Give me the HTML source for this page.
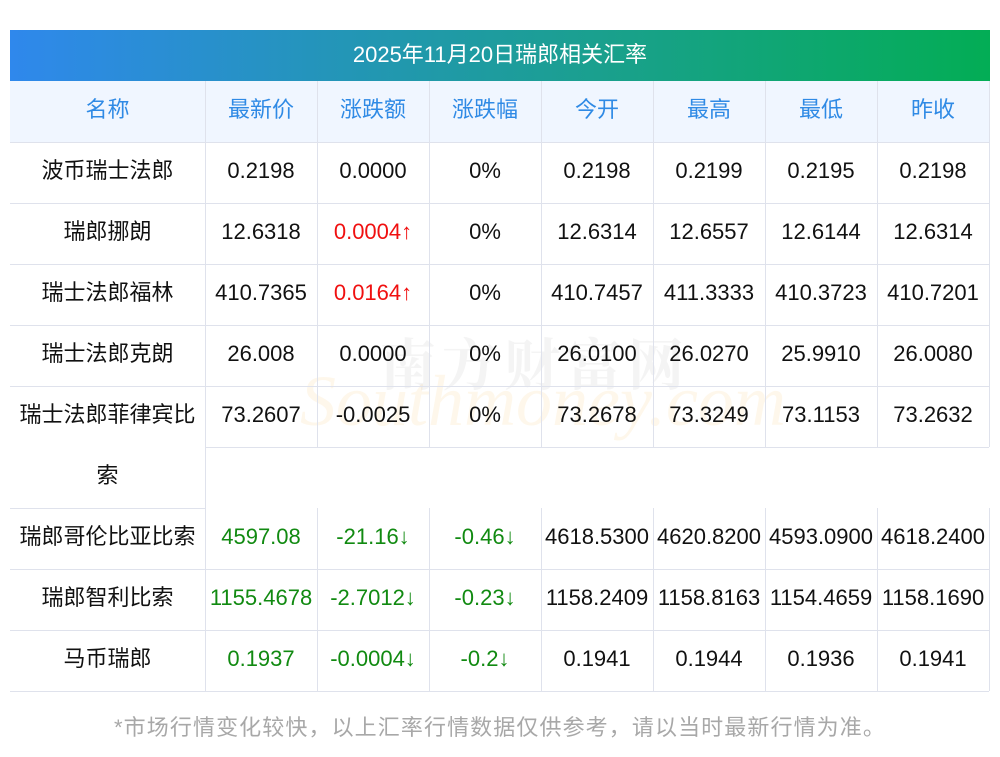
<!DOCTYPE html>
<html><head><meta charset="utf-8"><style>
body{margin:0;width:1000px;height:757px;background:#fff;position:relative;overflow:hidden;font-family:"Liberation Sans","Noto Sans CJK SC",sans-serif;}
.bar{position:absolute;left:10px;top:30px;width:980px;height:51px;background:linear-gradient(90deg,#2f88ec,#1aa08e 60%,#03ad55);color:#fff;font-size:22px;text-align:center;line-height:49px;}
.hd{position:absolute;left:10px;top:81px;width:979px;height:61px;background:#f0f6ff;}
.h{position:absolute;background:#dfe2ec;height:1px;}
.v{position:absolute;background:#dfe2ec;width:1px;}
.c{position:absolute;height:61px;line-height:57px;text-align:center;font-size:22px;color:#111;white-space:nowrap;}
.b{color:#2f8ae5;}
.r{color:#f01010;}
.g{color:#118a11;}
.wm1{position:absolute;left:380px;top:322px;font-size:56px;color:rgba(120,120,120,0.08);letter-spacing:6px;font-family:"Noto Serif CJK SC",serif;font-weight:bold;}
.wm2{position:absolute;left:300px;top:360px;font-size:72px;color:rgba(250,190,90,0.12);font-style:italic;font-family:"Liberation Serif",serif;}
.ft{position:absolute;left:0;width:1000px;top:710px;text-align:center;font-size:22px;color:#a8a8a8;letter-spacing:1.1px;}
</style></head><body>
<div class="bar">2025年11月20日瑞郎相关汇率</div>
<div class="hd"></div>
<div class="wm2">Southmoney.com</div>
<div class="wm1">南方财富网</div>

<div class="h" style="left:10px;top:142px;width:979px"></div>
<div class="h" style="left:10px;top:203px;width:979px"></div>
<div class="h" style="left:10px;top:264px;width:979px"></div>
<div class="h" style="left:10px;top:325px;width:979px"></div>
<div class="h" style="left:10px;top:386px;width:979px"></div>
<div class="h" style="left:205px;top:447px;width:784px"></div>
<div class="h" style="left:10px;top:508px;width:195px"></div>
<div class="h" style="left:10px;top:569px;width:979px"></div>
<div class="h" style="left:10px;top:630px;width:979px"></div>
<div class="h" style="left:10px;top:691px;width:979px"></div>

<div class="v" style="left:205px;top:81px;height:610px"></div>
<div class="v" style="left:317px;top:81px;height:366px"></div>
<div class="v" style="left:429px;top:81px;height:366px"></div>
<div class="v" style="left:541px;top:81px;height:366px"></div>
<div class="v" style="left:653px;top:81px;height:366px"></div>
<div class="v" style="left:765px;top:81px;height:366px"></div>
<div class="v" style="left:877px;top:81px;height:366px"></div>
<div class="v" style="left:989px;top:81px;height:366px"></div>
<div class="v" style="left:317px;top:508px;height:183px"></div>
<div class="v" style="left:429px;top:508px;height:183px"></div>
<div class="v" style="left:541px;top:508px;height:183px"></div>
<div class="v" style="left:653px;top:508px;height:183px"></div>
<div class="v" style="left:765px;top:508px;height:183px"></div>
<div class="v" style="left:877px;top:508px;height:183px"></div>
<div class="v" style="left:989px;top:508px;height:183px"></div>

<div class="c b" style="left:10px;width:195px;top:81px">名称</div>
<div class="c b" style="left:205px;width:112px;top:81px">最新价</div>
<div class="c b" style="left:317px;width:112px;top:81px">涨跌额</div>
<div class="c b" style="left:429px;width:112px;top:81px">涨跌幅</div>
<div class="c b" style="left:541px;width:112px;top:81px">今开</div>
<div class="c b" style="left:653px;width:112px;top:81px">最高</div>
<div class="c b" style="left:765px;width:112px;top:81px">最低</div>
<div class="c b" style="left:877px;width:112px;top:81px">昨收</div>

<div class="c" style="left:10px;width:195px;top:142px">波币瑞士法郎</div>
<div class="c" style="left:205px;width:112px;top:142px">0.2198</div>
<div class="c" style="left:317px;width:112px;top:142px">0.0000</div>
<div class="c" style="left:429px;width:112px;top:142px">0%</div>
<div class="c" style="left:541px;width:112px;top:142px">0.2198</div>
<div class="c" style="left:653px;width:112px;top:142px">0.2199</div>
<div class="c" style="left:765px;width:112px;top:142px">0.2195</div>
<div class="c" style="left:877px;width:112px;top:142px">0.2198</div>

<div class="c" style="left:10px;width:195px;top:203px">瑞郎挪朗</div>
<div class="c" style="left:205px;width:112px;top:203px">12.6318</div>
<div class="c r" style="left:317px;width:112px;top:203px">0.0004↑</div>
<div class="c" style="left:429px;width:112px;top:203px">0%</div>
<div class="c" style="left:541px;width:112px;top:203px">12.6314</div>
<div class="c" style="left:653px;width:112px;top:203px">12.6557</div>
<div class="c" style="left:765px;width:112px;top:203px">12.6144</div>
<div class="c" style="left:877px;width:112px;top:203px">12.6314</div>

<div class="c" style="left:10px;width:195px;top:264px">瑞士法郎福林</div>
<div class="c" style="left:205px;width:112px;top:264px">410.7365</div>
<div class="c r" style="left:317px;width:112px;top:264px">0.0164↑</div>
<div class="c" style="left:429px;width:112px;top:264px">0%</div>
<div class="c" style="left:541px;width:112px;top:264px">410.7457</div>
<div class="c" style="left:653px;width:112px;top:264px">411.3333</div>
<div class="c" style="left:765px;width:112px;top:264px">410.3723</div>
<div class="c" style="left:877px;width:112px;top:264px">410.7201</div>

<div class="c" style="left:10px;width:195px;top:325px">瑞士法郎克朗</div>
<div class="c" style="left:205px;width:112px;top:325px">26.008</div>
<div class="c" style="left:317px;width:112px;top:325px">0.0000</div>
<div class="c" style="left:429px;width:112px;top:325px">0%</div>
<div class="c" style="left:541px;width:112px;top:325px">26.0100</div>
<div class="c" style="left:653px;width:112px;top:325px">26.0270</div>
<div class="c" style="left:765px;width:112px;top:325px">25.9910</div>
<div class="c" style="left:877px;width:112px;top:325px">26.0080</div>

<div class="c" style="left:10px;width:195px;top:386px">瑞士法郎菲律宾比</div>
<div class="c" style="left:10px;width:195px;top:447px">索</div>
<div class="c" style="left:205px;width:112px;top:386px">73.2607</div>
<div class="c" style="left:317px;width:112px;top:386px">-0.0025</div>
<div class="c" style="left:429px;width:112px;top:386px">0%</div>
<div class="c" style="left:541px;width:112px;top:386px">73.2678</div>
<div class="c" style="left:653px;width:112px;top:386px">73.3249</div>
<div class="c" style="left:765px;width:112px;top:386px">73.1153</div>
<div class="c" style="left:877px;width:112px;top:386px">73.2632</div>

<div class="c" style="left:10px;width:195px;top:508px">瑞郎哥伦比亚比索</div>
<div class="c g" style="left:205px;width:112px;top:508px">4597.08</div>
<div class="c g" style="left:317px;width:112px;top:508px">-21.16↓</div>
<div class="c g" style="left:429px;width:112px;top:508px">-0.46↓</div>
<div class="c" style="left:541px;width:112px;top:508px">4618.5300</div>
<div class="c" style="left:653px;width:112px;top:508px">4620.8200</div>
<div class="c" style="left:765px;width:112px;top:508px">4593.0900</div>
<div class="c" style="left:877px;width:112px;top:508px">4618.2400</div>

<div class="c" style="left:10px;width:195px;top:569px">瑞郎智利比索</div>
<div class="c g" style="left:205px;width:112px;top:569px">1155.4678</div>
<div class="c g" style="left:317px;width:112px;top:569px">-2.7012↓</div>
<div class="c g" style="left:429px;width:112px;top:569px">-0.23↓</div>
<div class="c" style="left:541px;width:112px;top:569px">1158.2409</div>
<div class="c" style="left:653px;width:112px;top:569px">1158.8163</div>
<div class="c" style="left:765px;width:112px;top:569px">1154.4659</div>
<div class="c" style="left:877px;width:112px;top:569px">1158.1690</div>

<div class="c" style="left:10px;width:195px;top:630px">马币瑞郎</div>
<div class="c g" style="left:205px;width:112px;top:630px">0.1937</div>
<div class="c g" style="left:317px;width:112px;top:630px">-0.0004↓</div>
<div class="c g" style="left:429px;width:112px;top:630px">-0.2↓</div>
<div class="c" style="left:541px;width:112px;top:630px">0.1941</div>
<div class="c" style="left:653px;width:112px;top:630px">0.1944</div>
<div class="c" style="left:765px;width:112px;top:630px">0.1936</div>
<div class="c" style="left:877px;width:112px;top:630px">0.1941</div>

<div class="ft">*市场行情变化较快，以上汇率行情数据仅供参考，请以当时最新行情为准。</div>
</body></html>
